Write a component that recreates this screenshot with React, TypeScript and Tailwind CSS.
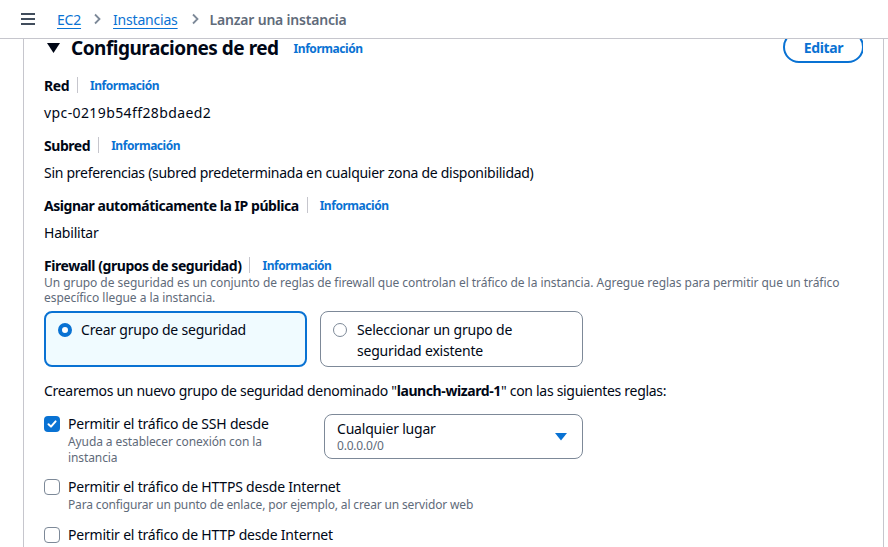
import React from 'react';

const font = { fontFamily: '"Noto Sans", "Open Sans", Arial, sans-serif' };

const Info = ({ className = '' }: { className?: string }) => (
  <span className={`text-[12px] font-bold tracking-[-0.45px] text-[#0972d3] ${className}`}>Información</span>
);

const FieldLabel = ({ label }: { label: string }) => (
  <div className="flex items-center h-5">
    <span className="text-[14px] font-bold tracking-[-0.45px] text-[#000716]">{label}</span>
    <span className="ml-2 h-4 w-px bg-[#c6c6cd]" />
    <Info className="ml-3 mt-[2px]" />
  </div>
);

const Checkbox = ({ checked = false }: { checked?: boolean }) =>
  checked ? (
    <span className="mt-[2px] flex h-4 w-4 shrink-0 items-center justify-center rounded-[4px] bg-[#0972d3]">
      <svg width="12" height="12" viewBox="0 0 12 12" fill="none">
        <path d="M2.5 6.2 5 8.6 9.6 3.4" stroke="white" strokeWidth="2" strokeLinecap="round" strokeLinejoin="round" />
      </svg>
    </span>
  ) : (
    <span className="mt-[2px] h-4 w-4 shrink-0 rounded-[4px] border-[1.5px] border-[#7d8998] bg-white" />
  );

export default function App() {
  return (
    <div className="h-[547px] w-[888px] overflow-hidden bg-white text-[#000716] tracking-[-0.2px]" style={font}>
      {/* Breadcrumb bar */}
      <header className="flex h-[39px] items-center border-b border-[#c6c6cd] bg-white">
        <svg className="ml-[20px]" width="16" height="14" viewBox="0 0 16 14">
          <path d="M1 2h14M1 7h14M1 12h14" stroke="#414d5c" strokeWidth="2" />
        </svg>
        <nav className="ml-[21px] flex items-center text-[14px]">
          <a className="text-[#0972d3] underline underline-offset-[3px] decoration-1">EC2</a>
          <svg className="mx-[11px]" width="10" height="12" viewBox="0 0 10 12">
            <path d="M3 1.5 7.5 6 3 10.5" stroke="#7d8998" strokeWidth="1.8" fill="none" />
          </svg>
          <a className="text-[#0972d3] underline underline-offset-[3px] decoration-1">Instancias</a>
          <svg className="ml-[12px] mr-[10px]" width="10" height="12" viewBox="0 0 10 12">
            <path d="M3 1.5 7.5 6 3 10.5" stroke="#7d8998" strokeWidth="1.8" fill="none" />
          </svg>
          <span className="font-semibold text-[#5f6b7a]">Lanzar una instancia</span>
        </nav>
      </header>

      {/* Network settings card (scrolled: its top edge sits under the bar) */}
      <div className="ml-[23px] mr-[4px] h-full border-x border-[#c6c6cd] pl-[20px] pr-[20px]">
        <div className="flex h-[24px] items-start justify-between">
          <div className="flex h-[18px] items-center">
            <svg className="ml-[3px]" width="13" height="10" viewBox="0 0 13 10">
              <path d="M0 0h13L6.5 10z" fill="#000716" />
            </svg>
            <h2 className="ml-[11px] text-[19px] font-bold leading-[18px] tracking-[-0.5px]">Configuraciones de red</h2>
            <Info className="ml-[15px] mt-[2px]" />
          </div>
          <div className="flex h-[24px] flex-col overflow-hidden">
            <button className="-mt-[8px] mr-[-1px] h-[32px] shrink-0 rounded-full border-2 border-[#0972d3] px-[19px] text-[14px] font-bold tracking-[-0.4px] text-[#0972d3]">
              Editar
            </button>
          </div>
        </div>

        <div className="mt-[12px] flex flex-col gap-[12px] text-[14px]">
          <div className="flex flex-col gap-2">
            <FieldLabel label="Red" />
            <div className="h-5 leading-5 tracking-[0.4px]">vpc-0219b54ff28bdaed2</div>
          </div>
          <div className="flex flex-col gap-2">
            <FieldLabel label="Subred" />
            <div className="h-5 leading-5 tracking-[-0.28px]">Sin preferencias (subred predeterminada en cualquier zona de disponibilidad)</div>
          </div>
          <div className="flex flex-col gap-2">
            <FieldLabel label="Asignar automáticamente la IP pública" />
            <div className="h-5 leading-5">Habilitar</div>
          </div>

          <div className="flex flex-col">
            <FieldLabel label="Firewall (grupos de seguridad)" />
            <p className="text-[12px] leading-[15px] tracking-[-0.05px] text-[#5f6b7a]">
              Un grupo de seguridad es un conjunto de reglas de firewall que controlan el tráfico de la instancia. Agregue reglas para permitir que un tráfico específico llegue a la instancia.
            </p>
            <div className="mt-[6px] flex gap-[13px]">
              <div className="flex h-[56px] w-[263px] items-start gap-[9px] rounded-lg border-2 border-[#0972d3] bg-[#f0fbff] px-[12px] pt-[7px]">
                <span className="mt-[3px] h-[14px] w-[14px] shrink-0 rounded-full border-[4px] border-[#0972d3] bg-white" />
                <span className="leading-5">Crear grupo de seguridad</span>
              </div>
              <div className="flex h-[56px] w-[263px] items-start gap-[10px] rounded-lg border border-[#7d8998] px-[12px] pt-[8px]">
                <span className="mt-[3px] h-[14px] w-[14px] shrink-0 rounded-full border border-[#7d8998] bg-white" />
                <span className="-mt-[1px] leading-[21px]">
                  Seleccionar un grupo de
                  <br />
                  seguridad existente
                </span>
              </div>
            </div>
          </div>

          <div className="mt-[2px] h-5 leading-5 tracking-[-0.3px]">
            Crearemos un nuevo grupo de seguridad denominado "<b className="tracking-[-0.4px]">launch-wizard-1</b>" con las siguientes reglas:
          </div>

          <div className="mt-[1px] flex items-start">
            <div className="flex w-[280px] items-start gap-2">
              <Checkbox checked />
              <div className="flex flex-col">
                <span className="h-5 leading-5">Permitir el tráfico de SSH desde</span>
                <span className="text-[12px] leading-4 tracking-[-0.1px] text-[#5f6b7a]">
                  Ayuda a establecer conexión con la
                  <br />
                  instancia
                </span>
              </div>
            </div>
            <div className="relative flex h-[45px] w-[259px] flex-col justify-center rounded-lg border border-[#7d8998] px-[12px]">
              <span className="leading-[18px]">Cualquier lugar</span>
              <span className="text-[12px] leading-[16px] text-[#5f6b7a]">0.0.0.0/0</span>
              <svg className="absolute right-[15px] top-[18px]" width="12" height="8" viewBox="0 0 12 8">
                <path d="M0 0h12L6 7.5z" fill="#0972d3" />
              </svg>
            </div>
          </div>

          <div className="-mt-[1px] flex items-start gap-2">
            <Checkbox />
            <div className="flex flex-col">
              <span className="h-5 leading-5">Permitir el tráfico de HTTPS desde Internet</span>
              <span className="text-[12px] leading-4 tracking-[-0.15px] text-[#5f6b7a]">
                Para configurar un punto de enlace, por ejemplo, al crear un servidor web
              </span>
            </div>
          </div>

          <div className="flex items-start gap-2">
            <Checkbox />
            <span className="h-5 leading-5">Permitir el tráfico de HTTP desde Internet</span>
          </div>
        </div>
      </div>
    </div>
  );
}
